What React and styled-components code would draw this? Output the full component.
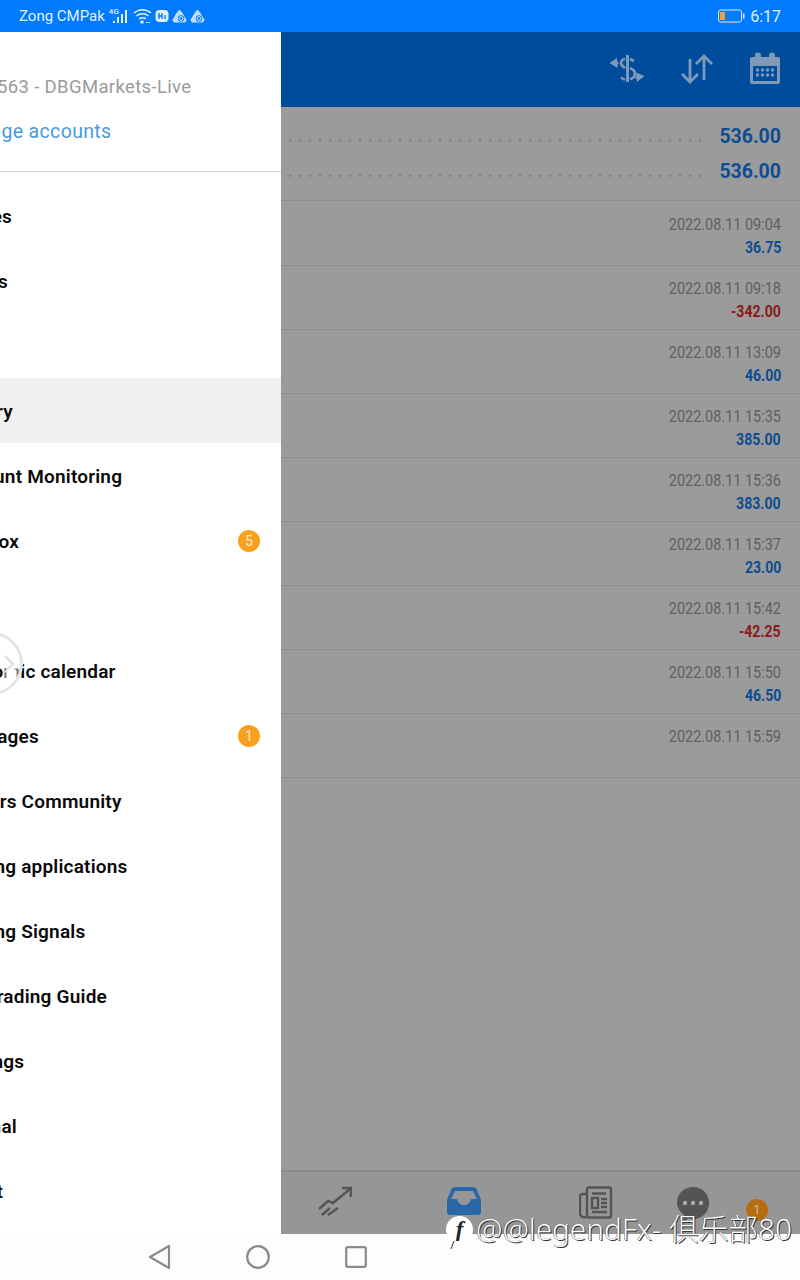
import React from "react";
import styled, { createGlobalStyle } from "styled-components";

const GlobalStyle = createGlobalStyle`
  html, body { margin: 0; padding: 0; background: #fff; }
  * { box-sizing: border-box; }
`;

const Screen = styled.div`
  position: relative;
  width: 800px;
  height: 1280px;
  display: flex;
  flex-direction: column;
  overflow: hidden;
  font-family: Roboto, "Noto Sans CJK SC", sans-serif;
  background: #9b9b9b;
`;

const StatusBar = styled.div`
  height: 32px;
  flex: none;
  display: flex;
  align-items: center;
  justify-content: space-between;
  padding: 0 19px;
  background: #007aff;
  color: #e2f0ff;
  font-size: 15px;
  position: relative;
  z-index: 3;
`;

const StatusGroup = styled.div`
  display: flex;
  align-items: center;
  gap: ${(p) => p.$gap || 4}px;
`;

const NetworkTag = styled.span`
  font-size: 8px;
  line-height: 8px;
  font-weight: 500;
  margin: -9px -10px 0 1px;
`;

const Clock = styled.span`
  font-size: 16px;
`;

const TopBar = styled.div`
  height: 75px;
  flex: none;
  display: flex;
  align-items: center;
  justify-content: flex-end;
  gap: 35px;
  padding: 0 19px 2px 0;
  background: #004c9c;
  color: #8199b8;
`;

const Summary = styled.div`
  height: 94px;
  flex: none;
  padding-top: 12px;
  border-bottom: 1px solid #8c8c8c;
`;

const SummaryRow = styled.div`
  height: 35px;
  display: flex;
  align-items: center;
  padding: 0 19px 0 285px;
  gap: 18px;
`;

const Dots = styled.div`
  flex: 1;
  height: 3px;
  margin-top: 8px;
  background-image: radial-gradient(circle, #848484 1.300px, transparent 1.700px);
  background-size: 10px 3px;
`;

const SummaryValue = styled.span`
  font-size: 19.500px;
  font-weight: 700;
  color: #0e4c91;
`;

const DealRow = styled.div`
  height: ${(p) => (p.$first ? 65 : 64)}px;
  flex: none;
  display: flex;
  flex-direction: column;
  align-items: flex-end;
  padding: ${(p) => (p.$first ? 13 : 12)}px 19px 0 0;
  border-bottom: 1px solid #8c8c8c;
`;

const DealDate = styled.span`
  font-size: 17px;
  line-height: 20px;
  color: #5f5f5f;
  transform: scaleX(0.85);
  transform-origin: right center;
`;

const DealProfit = styled.span`
  font-size: 16px;
  line-height: 20px;
  margin-top: 4px;
  font-weight: 700;
  color: ${(p) => (p.$loss ? "#8a1a1a" : "#0e4c91")};
  transform: scaleX(0.88);
  transform-origin: right center;
`;

const Spacer = styled.div`
  flex: 1;
`;

const BottomTabs = styled.div`
  height: 64px;
  flex: none;
  display: flex;
  align-items: flex-start;
  padding: 14px 0 0 281px;
  background: #969696;
  border-top: 2px solid #8c8c8c;
  position: relative;
`;

const Tab = styled.div`
  width: ${(p) => p.$w}px;
  display: flex;
  justify-content: center;
  color: #545454;
`;

const TabBadge = styled.span`
  position: absolute;
  left: 746px;
  top: 27px;
  width: 22px;
  height: 22px;
  border-radius: 50%;
  background: #b66d12;
  color: #d8b88c;
  font-size: 13px;
  line-height: 22px;
  text-align: center;
`;

const SystemNav = styled.div`
  height: 46px;
  flex: none;
  display: flex;
  align-items: center;
  gap: 74px;
  padding-left: 148px;
  background: #fdfdfd;
  color: #8a8a8a;
  position: relative;
  z-index: 3;
`;

const Watermark = styled.div`
  position: absolute;
  left: 446px;
  top: 1211px;
  z-index: 5;
  display: flex;
  align-items: center;
  gap: 3px;
  font-family: "Noto Sans", "Noto Sans CJK SC", sans-serif;
  font-weight: 300;
  font-size: 29.700px;
  line-height: 36px;
  white-space: nowrap;
  color: #fff;
  text-shadow: 1px 1px 0 #333, -0.5px 0 0 #555;
`;

const Drawer = styled.div`
  position: absolute;
  left: 0;
  top: 32px;
  bottom: 46px;
  width: 281px;
  background: #fff;
  overflow: hidden;
  z-index: 2;
`;

const DrawerHead = styled.div`
  height: 140px;
  padding: 43px 0 0 0;
  border-bottom: 1px solid #d5d5d5;
`;

const AccountLine = styled.div`
  margin-left: -46px;
  font-size: 18.500px;
  line-height: 24px;
  letter-spacing: 0.35px;
  color: #9a9a9a;
  white-space: nowrap;
`;

const ManageLine = styled(AccountLine)`
  margin-top: 21px;
  margin-left: -49px;
  font-size: 19.500px;
  color: #4a9ad8;
`;

const MenuList = styled.div`
  display: flex;
  flex-direction: column;
  padding-top: 11px;
`;

const MenuRow = styled.div`
  height: 65px;
  flex: none;
  display: flex;
  align-items: center;
  justify-content: space-between;
  padding: 0 21px 0 0;
  background: ${(p) => (p.$active ? "#f0f0f0" : "transparent")};
`;

const MenuLabel = styled.span`
  margin-left: ${(p) => p.$shift ?? -50}px;
  padding-top: 2px;
  font-size: 19px;
  font-weight: 600;
  letter-spacing: 0.2px;
  color: #0a0a0a;
  white-space: nowrap;
`;

const CountBadge = styled.span`
  width: 22px;
  height: 22px;
  border-radius: 50%;
  background: #f7a11c;
  color: #ffe9c8;
  font-size: 14px;
  line-height: 22px;
  text-align: center;
`;

const EdgeHandle = styled.div`
  position: absolute;
  left: -40px;
  top: 632px;
  width: 63px;
  height: 63px;
  border-radius: 50%;
  border: 3px solid #e4e4e4;
  background: linear-gradient(to right, transparent 72%, #fff 78%, #fff 88%, rgba(255, 255, 255, 0.4) 96%);
  color: #dcdcdc;
  z-index: 4;
  display: flex;
  align-items: center;
  justify-content: flex-end;
  padding-right: 6px;
`;

const BubbleMark = styled.span`
  width: 27px;
  height: 27px;
  flex: none;
  position: relative;
  border-radius: 50%;
  background: #fff;
  color: #222;
  font-family: "Liberation Serif", serif;
  font-style: italic;
  font-weight: 700;
  font-size: 23px;
  line-height: 27px;
  text-align: center;
  text-shadow: none;

  &::after {
    content: "";
    position: absolute;
    left: 6px;
    bottom: -6px;
    width: 8px;
    height: 8px;
    background: #fff;
    border-left: 1px solid #333;
    transform: skewX(-20deg);
  }
`;

const summary = ["536.00", "536.00"];

const deals = [
  { date: "2022.08.11 09:04", profit: "36.75" },
  { date: "2022.08.11 09:18", profit: "-342.00", loss: true },
  { date: "2022.08.11 13:09", profit: "46.00" },
  { date: "2022.08.11 15:35", profit: "385.00" },
  { date: "2022.08.11 15:36", profit: "383.00" },
  { date: "2022.08.11 15:37", profit: "23.00" },
  { date: "2022.08.11 15:42", profit: "-42.25", loss: true },
  { date: "2022.08.11 15:50", profit: "46.50" },
  { date: "2022.08.11 15:59", profit: "" },
];

const menu = [
  { label: "Quotes" },
  { label: "Charts" },
  { label: "Trade" },
  { label: "History", active: true },
  { label: "Account Monitoring" },
  { label: "Mailbox", badge: 5 },
  { label: "News" },
  { label: "Economic calendar" },
  { label: "Messages", badge: 1 },
  { label: "Traders Community" },
  { label: "Trading applications" },
  { label: "Trading Signals" },
  { label: "MT Trading Guide", shift: -47 },
  { label: "Settings", shift: -48 },
  { label: "Journal", shift: -49 },
  { label: "About", shift: -49 },
];

const SignalIcon = () => (
  <svg width="18" height="16" viewBox="0 0 18 16" fill="currentColor">
    <rect x="1" y="13" width="2" height="2" />
    <rect x="5" y="9" width="2" height="6" />
    <rect x="9" y="6" width="2" height="9" />
    <rect x="13" y="2" width="2" height="13" />
  </svg>
);

const WifiIcon = () => (
  <svg width="19" height="16" viewBox="0 0 19 16" fill="none" stroke="currentColor" strokeWidth="1.500">
    <path d="M1 5c5-4.500 12-4.500 17 0M3.500 8c3.500-3 8.500-3 12 0M6 11c2-1.500 5-1.500 7 0" />
    <circle cx="9" cy="14" r="1" fill="currentColor" />
    <path d="M13 14.500h5" strokeWidth="1.200" strokeDasharray="1.500 1" />
  </svg>
);

const HiIcon = () => (
  <svg width="14" height="14" viewBox="0 0 14 14">
    <rect x="0.500" y="1" width="13" height="12" rx="4" fill="currentColor" />
    <path d="M4 4v6M7 4v6M4 7h3M10 6v4" stroke="#007aff" strokeWidth="1.400" />
  </svg>
);

const PagodaIcon = () => (
  <svg width="15" height="15" viewBox="0 0 15 15" fill="currentColor">
    <path d="M7.500 0.500 10.500 4l2 3.500 2.200 3.500-1.700 2.500H2L0.300 11l2.200-3.500 2-3.500z" opacity="0.850" />
    <circle cx="9" cy="9.500" r="3.200" fill="#007aff" />
    <circle cx="9" cy="9.500" r="1.900" fill="none" stroke="currentColor" strokeWidth="1" />
  </svg>
);

const BatteryIcon = () => (
  <svg width="27" height="14" viewBox="0 0 27 14" fill="none">
    <rect x="0.500" y="1" width="23" height="12" rx="2" stroke="#dcecff" />
    <rect x="2" y="3" width="5" height="8" fill="#f0a030" />
    <rect x="25" y="4.500" width="1.500" height="5" fill="#dcecff" />
  </svg>
);

const SwapDollarIcon = () => (
  <svg width="36" height="30" viewBox="0 0 36 30" fill="none" stroke="currentColor" strokeWidth="2.600">
    <path d="M18.500 1v27" strokeWidth="3" />
    <path d="M16 5c-4 .5-5 4-3 6.500l3 2.500" />
    <path d="M21 14c5 2 6 5 4 9l-4 2.500" />
    <path d="M21 5l4 2M16 26l-4-2.500" />
    <path d="M0.500 9 8 4l.500 4 1.500 1-1.500 1.500V14z" fill="currentColor" stroke="none" />
    <path d="M35.500 22 27 18.500l.500 3.500-2 2 2 .500 .500 3.500z" fill="currentColor" stroke="none" />
  </svg>
);

const SortIcon = () => (
  <svg width="34" height="32" viewBox="0 0 34 32" fill="none" stroke="currentColor" strokeWidth="2.800">
    <path d="M10 6v23M2 21l8 8 8-8M24 27V3M16 11l8-8 8 8" />
  </svg>
);

const CalendarIcon = () => (
  <svg width="32" height="33" viewBox="0 0 32 33" fill="currentColor">
    <circle cx="9" cy="3.500" r="3" />
    <circle cx="23" cy="3.500" r="3" />
    <path d="M3 5h26a2 2 0 0 1 2 2v23a2 2 0 0 1-2 2H3a2 2 0 0 1-2-2V7a2 2 0 0 1 2-2zm1 9v15h24V14z" fillRule="evenodd" />
    {[18, 23].map((y) =>
      [8, 13, 18, 23].map((x) => <circle key={`${x}-${y}`} cx={x + 0.5} cy={y} r="1.700" />)
    )}
  </svg>
);

const ChartTabIcon = () => (
  <svg width="34" height="32" viewBox="0 0 34 32" fill="none" stroke="currentColor" strokeWidth="2.400">
    <path d="M1 23l9-8 5 2L32 3" />
    <path d="M24 2h9.500l-1 9" />
    <path d="M4 29l8-7M10 29l10-7" />
  </svg>
);

const InboxTabIcon = () => (
  <svg width="34" height="30" viewBox="0 0 34 30" fill="#2a66a8">
    <path
      fillRule="evenodd"
      d="M8 1h18c2 0 3 1 4 3l4 10v12c0 2-1 3-3 3H3c-2 0-3-1-3-3V14L4 4c1-2 2-3 4-3zM8 5 4 13h6c1 4 4 6 7 6s6-2 7-6h6L26 5z"
    />
  </svg>
);

const NewsTabIcon = () => (
  <svg width="34" height="34" viewBox="0 0 34 34" fill="none" stroke="currentColor" strokeWidth="2.400">
    <rect x="8" y="1.500" width="24" height="30" rx="2" />
    <path d="M8 8H4C2 8 1 9 1 11v16c0 3 2 4.500 6 4.500" />
    <path d="M13 7.500h14" />
    <rect x="13" y="12" width="6" height="10" />
    <path d="M22 13h6M22 17h6M22 21h6M13 26h15" />
  </svg>
);

const ChatTabIcon = () => (
  <svg width="34" height="40" viewBox="0 0 34 40" fill="currentColor">
    <path d="M17 1c9 0 16 6.500 16 16s-7 16-16 16c-2 0-3.500-.300-5-1l-5 6 1-9C3 25 1 21 1 17 1 7.500 8 1 17 1z" />
    <circle cx="9" cy="17" r="2.200" fill="#a8a8a8" />
    <circle cx="17" cy="17" r="2.200" fill="#a8a8a8" />
    <circle cx="25" cy="17" r="2.200" fill="#a8a8a8" />
  </svg>
);

const BackIcon = () => (
  <svg width="24" height="26" viewBox="0 0 24 26" fill="none" stroke="currentColor" strokeWidth="2.200">
    <path d="M21 2v22L2 13z" strokeLinejoin="round" />
  </svg>
);

const HomeIcon = () => (
  <svg width="24" height="24" viewBox="0 0 24 24" fill="none" stroke="currentColor" strokeWidth="2.200">
    <circle cx="12" cy="12" r="10.800" />
  </svg>
);

const RecentBox = styled.svg`
  margin-left: 1px;
`;

const RecentIcon = () => (
  <RecentBox width="22" height="22" viewBox="0 0 22 22" fill="none" stroke="currentColor" strokeWidth="2.200">
    <rect x="1.200" y="1.200" width="19.600" height="19.600" rx="1.500" />
  </RecentBox>
);

const ChevronIcon = () => (
  <svg width="10" height="18" viewBox="0 0 10 18" fill="none" stroke="currentColor" strokeWidth="2">
    <path d="M1 1l8 8-8 8" />
  </svg>
);

const App = () => {
  return (
    <Screen>
      <GlobalStyle />
      <StatusBar>
        <StatusGroup $gap={3}>
          <span>Zong CMPak</span>
          <NetworkTag>4G</NetworkTag>
          <SignalIcon />
          <WifiIcon />
          <HiIcon />
          <PagodaIcon />
          <PagodaIcon />
        </StatusGroup>
        <StatusGroup $gap={5}>
          <BatteryIcon />
          <Clock>6:17</Clock>
        </StatusGroup>
      </StatusBar>

      <TopBar>
        <SwapDollarIcon />
        <SortIcon />
        <CalendarIcon />
      </TopBar>

      <Summary>
        {summary.map((value, i) => (
          <SummaryRow key={i}>
            <Dots />
            <SummaryValue>{value}</SummaryValue>
          </SummaryRow>
        ))}
      </Summary>

      {deals.map((deal, i) => (
        <DealRow key={deal.date} $first={i === 0}>
          <DealDate>{deal.date}</DealDate>
          <DealProfit $loss={deal.loss}>{deal.profit}</DealProfit>
        </DealRow>
      ))}

      <Spacer />

      <BottomTabs>
        <Tab $w={108}><ChartTabIcon /></Tab>
        <Tab $w={150}><InboxTabIcon /></Tab>
        <Tab $w={114}><NewsTabIcon /></Tab>
        <Tab $w={80}><ChatTabIcon /></Tab>
        <TabBadge>1</TabBadge>
      </BottomTabs>

      <SystemNav>
        <BackIcon />
        <HomeIcon />
        <RecentIcon />
      </SystemNav>

      <Drawer>
        <DrawerHead>
          <AccountLine>1234563 - DBGMarkets-Live</AccountLine>
          <ManageLine>Manage accounts</ManageLine>
        </DrawerHead>
        <MenuList>
          {menu.map((item) => (
            <MenuRow key={item.label} $active={item.active}>
              <MenuLabel $shift={item.shift}>{item.label}</MenuLabel>
              {item.badge && <CountBadge>{item.badge}</CountBadge>}
            </MenuRow>
          ))}
        </MenuList>
      </Drawer>

      <EdgeHandle>
        <ChevronIcon />
      </EdgeHandle>

      <Watermark>
        <BubbleMark>f</BubbleMark>
        <span>@@legendFx- 俱乐部80</span>
      </Watermark>
    </Screen>
  );
};

export default App;
